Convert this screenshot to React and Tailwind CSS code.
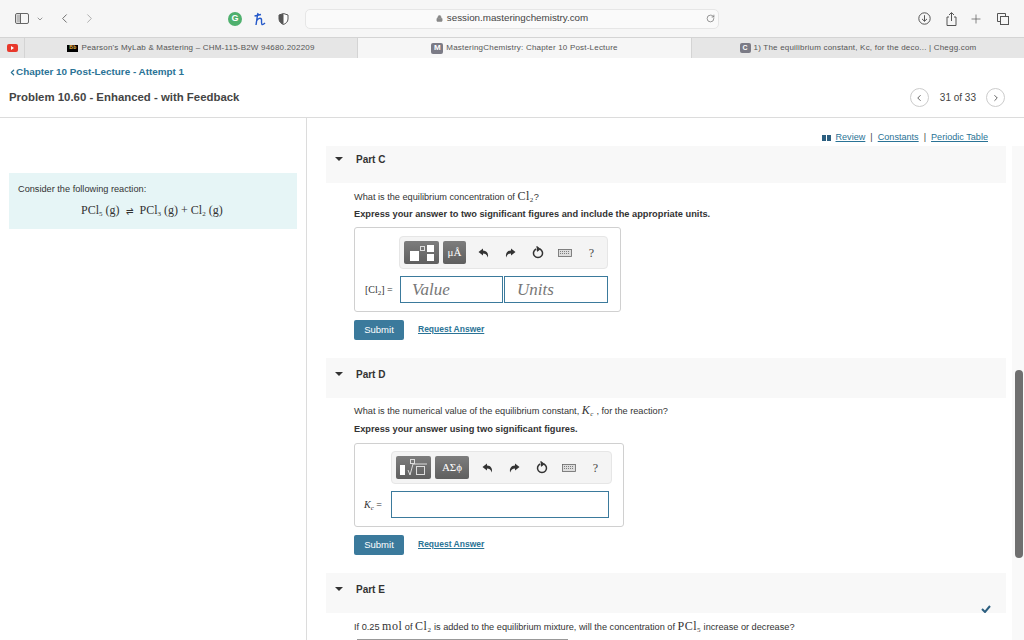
import React from 'react'
import { ChevronDown, ChevronLeft, ChevronRight, Lock, RotateCw, Plus } from 'lucide-react'

const sans = 'font-["Liberation_Sans",Arial,sans-serif]'
const serif = 'font-["Liberation_Serif","Times_New_Roman",serif]'

function Sub({ children }) {
  return <sub className="text-[7px] leading-none">{children}</sub>
}

function Math({ children }) {
  return <span className={`text-[12px] tracking-[0.5px] ${serif}`}>{children}</span>
}

function Tab({ className, badge, children }) {
  return (
    <div className={`flex h-full items-center justify-center gap-[3px] text-[8px] tracking-[0.2px] text-[#555] ${className}`}>
      {badge}
      <span>{children}</span>
    </div>
  )
}

function Browser() {
  return (
    <div className="bg-[#f6f6f6]">
      <div className="flex h-[37px] items-center">
        <div className="flex w-[305px] items-center pl-[15px] text-[#666]">
          <svg width="14" height="11" viewBox="0 0 14 11" fill="none" stroke="#666" strokeWidth="1">
            <rect x="0.5" y="0.5" width="13" height="10" rx="1.5" />
            <rect x="1.5" y="1.5" width="3.5" height="8" fill="#bbb" stroke="none" />
            <path d="M5.5 0.5v10" />
          </svg>
          <ChevronDown size={8} className="ml-[7px]" strokeWidth={2} />
          <ChevronLeft size={15} className="ml-[13px]" strokeWidth={1.5} />
          <ChevronRight size={15} className="ml-[10px] text-[#aaa]" strokeWidth={1.5} />
          <div className="ml-[131px] flex h-[14px] w-[14px] items-center justify-center rounded-full bg-[#4fb06e] text-[9px] font-bold text-white">G</div>
          <svg width="12" height="14" viewBox="0 0 12 14" fill="none" stroke="#2458c9" strokeWidth="1.4" className="ml-[12px]">
            <path d="M4 1C3 5 2.5 10 2 13M0.5 4C3 3.4 5 3 7 2.5M2.5 9C4 6 7 5.5 7.5 7.5C7.8 9 7 11 8 12.5C9 13 10 12 11 11" />
          </svg>
          <svg width="11" height="12" viewBox="0 0 11 12" className="ml-[12px]">
            <path d="M5.5 0.5 L10 2 V6 C10 9 7.5 10.7 5.5 11.5 C3.5 10.7 1 9 1 6 V2 Z" fill="#fff" stroke="#555" />
            <path d="M5.5 0.5 L1 2 V6 C1 9 3.5 10.7 5.5 11.5 Z" fill="#555" />
          </svg>
        </div>
        <div className="flex h-[20px] w-[414px] items-center rounded-[5px] border border-[#e6e6e6] bg-[#fafafa]">
          <div className="flex flex-1 items-center justify-center gap-1 pl-[12px] text-[9.8px] text-[#444]">
            <Lock size={7} className="text-[#888]" fill="#888" />
            <span>session.masteringchemistry.com</span>
          </div>
          <RotateCw size={9} className="mr-[3px] text-[#777]" />
        </div>
        <div className="ml-auto flex items-center pr-[15px] text-[#666]">
          <svg width="13" height="13" viewBox="0 0 13 13" fill="none" stroke="#555" strokeWidth="1">
            <circle cx="6.5" cy="6.5" r="5.7" />
            <path d="M6.5 3.2v6M4 6.9l2.5 2.4 2.5-2.4" />
          </svg>
          <svg width="11" height="14" viewBox="0 0 11 14" fill="none" stroke="#555" strokeWidth="1" className="ml-[15px]">
            <path d="M3 5H1v8.5h9V5H8M5.5 9V1M3 3l2.5-2.5L8 3" />
          </svg>
          <Plus size={14} className="ml-[12px] text-[#555]" strokeWidth={1.2} />
          <svg width="12" height="12" viewBox="0 0 12 12" fill="none" stroke="#555" strokeWidth="1" className="ml-[14px]">
            <rect x="3.5" y="3.5" width="8" height="8" />
            <path d="M3.5 8.5h-3v-8h8v3" />
          </svg>
        </div>
      </div>
      <div className="flex h-[21px] border-t border-[#d4d4d4]">
        <div className="flex w-[25px] items-center justify-center border-r border-[#d4d4d4] bg-[#e6e6e6]">
          <div className="flex h-[8px] w-[11px] items-center justify-center rounded-[2px] bg-[#e8392c]">
            <div className="h-0 w-0 border-y-[2px] border-l-[3px] border-y-transparent border-l-white" />
          </div>
        </div>
        <Tab
          className="w-[333px] border-r border-[#d4d4d4] bg-[#e6e6e6]"
          badge={<span className="flex h-[7px] w-[11px] items-center justify-center bg-black text-[5px] font-bold text-[#e8b84a]">Bb</span>}
        >
          Pearson's MyLab &amp; Mastering – CHM-115-B2W 94680.202209
        </Tab>
        <Tab
          className="w-[333px] bg-[#f6f6f6]"
          badge={<span className="flex h-[11px] w-[12px] items-center justify-center rounded-[2px] bg-[#7b7b86] text-[8px] font-bold text-white">M</span>}
        >
          MasteringChemistry: Chapter 10 Post-Lecture
        </Tab>
        <Tab
          className="flex-1 border-l border-[#d4d4d4] bg-[#e6e6e6]"
          badge={<span className="flex h-[10px] w-[11px] items-center justify-center rounded-[2px] bg-[#7b7b86] text-[7px] font-bold text-white">C</span>}
        >
          1) The equilibrium constant, Kc, for the deco... | Chegg.com
        </Tab>
      </div>
    </div>
  )
}

function PartHeader({ name, className, check }) {
  return (
    <div className={`relative mr-[18px] ml-[19px] bg-[#f8f8f8] pl-[9px] ${className}`}>
      <div className="flex h-[12px] items-center">
        <div className="h-0 w-0 border-x-[4px] border-t-[4px] border-x-transparent border-t-[#333]" />
        <span className="ml-[13px] text-[10px] font-bold text-[#333]">{name}</span>
      </div>
      {check && (
        <svg width="10" height="8" viewBox="0 0 10 8" className="absolute right-[15px] bottom-0">
          <path d="M1 4l3 3 5-6" fill="none" stroke="#2c5f80" strokeWidth="2" />
        </svg>
      )}
    </div>
  )
}

function Answer() {
  return (
    <div className="mt-[8px] flex items-center pl-[47px]">
      <div className="flex h-[20px] w-[50px] items-center justify-center rounded-[2px] bg-[#3b7a9c] text-[9.5px] text-white">Submit</div>
      <span className="mb-[2px] ml-[14px] text-[8.5px] font-bold text-[#2a7396] underline">Request Answer</span>
    </div>
  )
}

function Tool({ className, children }) {
  return (
    <div className={`flex h-[23px] items-center justify-center rounded-[2px] bg-gradient-to-b from-[#7d7d7d] to-[#5f5f5f] text-white ${className}`}>
      {children}
    </div>
  )
}

function ToolIcons({ className }) {
  return (
    <div className={`flex items-center text-[#333] [&>*]:flex [&>*]:w-[27px] [&>*]:justify-center ${className}`}>
      <span>
        <svg width="11" height="10" viewBox="0 0 11 10" fill="#333">
          <path d="M5 0.5L0.5 4L5 7.5V5.5C7.5 5.5 9 6.8 9.8 9.5C10.8 5.8 9 2.6 5 2.5Z" />
        </svg>
      </span>
      <span>
        <svg width="11" height="10" viewBox="0 0 11 10" fill="#333">
          <path d="M6 0.5L10.5 4L6 7.5V5.5C3.5 5.5 2 6.8 1.2 9.5C0.2 5.8 2 2.6 6 2.5Z" />
        </svg>
      </span>
      <span>
        <svg width="12" height="13" viewBox="0 0 12 13" fill="none" stroke="#333" strokeWidth="1.5">
          <path d="M7.8 3A4.5 4.5 0 1 1 4.2 3" />
          <path d="M4.6 0.5L7.8 3L5 5.2" strokeWidth="1.2" fill="#333" />
        </svg>
      </span>
      <span>
        <svg width="14" height="8" viewBox="0 0 14 8" fill="#ddd" stroke="#666" strokeWidth="0.8">
          <rect x="0.5" y="0.5" width="13" height="7" />
          <path d="M2 2.5h10M2 4.5h10" strokeDasharray="1 1" />
        </svg>
      </span>
      <span className={`text-[12px] text-[#444] ${serif}`}>?</span>
    </div>
  )
}

export default function App() {
  return (
    <div className={`flex h-[640px] w-[1024px] flex-col overflow-hidden bg-white ${sans}`}>
      <Browser />

      <div className="flex h-[60px] flex-col border-b border-[#dcdcdc] bg-white">
        <div className="flex items-center pt-[8px] pl-[9px] text-[9.9px] font-bold leading-[12px] text-[#2a7396]">
          <ChevronLeft size={9} strokeWidth={3.5} className="-ml-[1px] -mr-[1px]" />
          <span>Chapter 10 Post-Lecture - Attempt 1</span>
        </div>
        <div className="mt-[10px] flex items-center justify-between pr-[19px] pl-[9px]">
          <h1 className="text-[11.4px] font-bold text-[#444]">Problem 10.60 - Enhanced - with Feedback</h1>
          <div className="flex items-center text-[10px] text-[#444]">
            <div className="flex h-[19px] w-[19px] items-center justify-center rounded-full border border-[#ccc]">
              <ChevronLeft size={10} />
            </div>
            <span className="mr-[10px] ml-[11px]">31 of 33</span>
            <div className="flex h-[19px] w-[19px] items-center justify-center rounded-full border border-[#ccc]">
              <ChevronRight size={10} />
            </div>
          </div>
        </div>
      </div>

      <div className="flex min-h-0 flex-1">
        <div className="w-[307px] shrink-0 border-r border-[#dcdcdc] pt-[55px] pl-[9px]">
          <div className="h-[56px] w-[288px] bg-[#e6f5f6] pt-[10px] pl-[9px]">
            <p className="text-[9.2px] leading-[12px] text-[#333]">Consider the following reaction:</p>
            <p className={`mt-[8px] pl-[63px] text-[12px] leading-[14px] text-[#333] ${serif}`}>
              PCl<Sub>5</Sub> (g) <span className="mx-[3px] text-[9px]">⇌</span> PCl<Sub>3</Sub> (g) + Cl<Sub>2</Sub> (g)
            </p>
          </div>
        </div>

        <div className="relative min-w-0 flex-1 overflow-hidden">
          <div className="absolute top-[28px] right-0 bottom-0 w-[12px] bg-[#f9f9f9]">
            <div className="absolute top-[224px] right-[1px] h-[188px] w-[8px] rounded-full bg-[#6f6f6f]" />
          </div>

          <div className="flex h-[28px] items-center justify-end pt-[12px] pr-[36px] text-[9.1px] text-[#2a7396]">
            <svg width="9" height="6" viewBox="0 0 9 6" fill="#2c5f80" className="mr-[5px]">
              <rect width="4" height="6" />
              <rect x="5" width="4" height="6" />
            </svg>
            <span className="underline">Review</span>
            <span className="mx-[5px] text-[#444]">|</span>
            <span className="underline">Constants</span>
            <span className="mx-[5px] text-[#444]">|</span>
            <span className="underline">Periodic Table</span>
          </div>

          <PartHeader name="Part C" className="h-[37px] pt-[7px]" />
          <div className="pt-[7px]">
            <p className="h-[12px] pl-[47px] text-[9.2px] leading-[12px] text-[#333]">
              What is the equilibrium concentration of <Math>Cl<Sub>2</Sub></Math>?
            </p>
            <p className="mt-[6px] pl-[47px] text-[9.25px] font-bold leading-[12px] text-[#333]">
              Express your answer to two significant figures and include the appropriate units.
            </p>
            <div className="mt-[7px] ml-[47px] h-[85px] w-[267px] rounded-[3px] border border-[#d0d0d0] pt-[8px] pl-[44px]">
              <div className="flex h-[33px] w-[209px] items-center rounded-[4px] border border-[#e6e6e6] bg-[#f4f4f4] pl-[4px]">
                <Tool className="w-[35px]">
                  <svg width="24" height="16" viewBox="0 0 24 16">
                    <rect x="0" y="6" width="9" height="10" fill="#fff" />
                    <rect x="10.5" y="1.5" width="4" height="4" fill="none" stroke="#ddd" />
                    <rect x="17" y="0" width="7" height="7" fill="#fff" />
                    <rect x="17" y="9" width="7" height="7" fill="#fff" />
                  </svg>
                </Tool>
                <Tool className={`ml-[4px] w-[23px] text-[11px] text-[#ccc] ${serif}`}>μÅ</Tool>
                <ToolIcons className="ml-[4px]" />
              </div>
              <div className="-ml-[34px] mt-[7px] flex items-center">
                <span className={`w-[35px] text-[10px] text-[#333] ${serif}`}>[Cl<Sub>2</Sub>] =</span>
                <div className={`flex h-[27px] w-[103px] items-center border border-[#3b7a9c] pl-[11px] text-[17px] italic text-[#777] ${serif}`}>Value</div>
                <div className={`ml-[1px] flex h-[27px] w-[104px] items-center border border-[#3b7a9c] pl-[12px] text-[17px] italic text-[#777] ${serif}`}>Units</div>
              </div>
            </div>
            <Answer />
          </div>

          <div className="mt-[18px]">
            <PartHeader name="Part D" className="h-[40px] pt-[10px]" />
            <p className="mt-[6px] h-[12px] pl-[47px] text-[9.2px] leading-[12px] text-[#333]">
              What is the numerical value of the equilibrium constant, <span className="italic"><Math>K<Sub>c</Sub></Math></span> , for the reaction?
            </p>
            <p className="mt-[7px] pl-[47px] text-[9.25px] font-bold leading-[12px] text-[#333]">
              Express your answer using two significant figures.
            </p>
            <div className="mt-[8px] ml-[47px] h-[84px] w-[270px] rounded-[3px] border border-[#d0d0d0] pt-[7px] pl-[36px]">
              <div className="flex h-[33px] w-[221px] items-center rounded-[4px] border border-[#e6e6e6] bg-[#f4f4f4] pl-[4px]">
                <Tool className="w-[35px]">
                  <svg width="28" height="17" viewBox="0 0 28 17" fill="none">
                    <rect x="0" y="6" width="5" height="10" fill="#fff" />
                    <rect x="10.5" y="0.5" width="4" height="4" stroke="#ddd" />
                    <path d="M8 11l2 5 3-11h14" stroke="#ddd" />
                    <rect x="16.5" y="7.5" width="8" height="8" stroke="#ddd" />
                  </svg>
                </Tool>
                <Tool className={`ml-[4px] w-[34px] text-[11px] text-[#ddd] ${serif}`}>ΑΣϕ</Tool>
                <ToolIcons className="ml-[5px]" />
              </div>
              <div className="-ml-[27px] mt-[7px] flex items-center">
                <span className={`w-[27px] text-[10px] text-[#333] ${serif}`}><i>K<Sub>c</Sub></i> =</span>
                <div className="h-[27px] w-[218px] border border-[#3b7a9c]" />
              </div>
            </div>
            <Answer />
          </div>

          <div className="mt-[18px]">
            <PartHeader name="Part E" className="h-[40px] pt-[10px]" check />
            <p className="mt-[7px] h-[12px] pl-[47px] text-[9.2px] leading-[12px] text-[#333]">
              If 0.25 <Math>mol</Math> of <Math>Cl<Sub>2</Sub></Math> is added to the equilibrium mixture, will the concentration of <Math>PCl<Sub>5</Sub></Math> increase or decrease?
            </p>
            <div className="mt-[7px] ml-[50px] h-px w-[211px] bg-[#999]" />
          </div>
        </div>
      </div>
    </div>
  )
}
